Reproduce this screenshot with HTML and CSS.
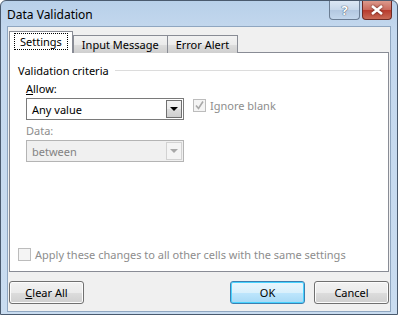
FILE: index.html
```html
<!DOCTYPE html>
<html lang="en">
<head>
    <meta charset="UTF-8">
    <title>Data Validation</title>
    <link rel="stylesheet" href="styles.css">
</head>
<body>
    <div class="window">
        <div class="titlebar">
            <span class="title">Data Validation</span>
            <div class="caption-buttons">
                <div class="cap-btn help">?</div>
                <div class="cap-btn close">
                    <svg width="14" height="10" viewBox="0 0 14 10">
                        <path d="M2 1 L12 9 M12 1 L2 9" stroke="#fff" stroke-width="2.6" fill="none"/>
                    </svg>
                </div>
            </div>
        </div>
        <div class="client">
            <div class="tabs">
                <div class="tab active"><span class="focus">Settings</span></div>
                <div class="tab">Input Message</div>
                <div class="tab">Error Alert</div>
            </div>
            <div class="panel">
                <div class="group-title">
                    <span>Validation criteria</span>
                    <div class="rule"></div>
                </div>
                <div class="row">
                    <div class="field">
                        <div class="label"><u>A</u>llow:</div>
                        <div class="select">
                            <span>Any value</span>
                            <div class="drop"><div class="arrow"></div></div>
                        </div>
                        <div class="label disabled">Data:</div>
                        <div class="select off">
                            <span>between</span>
                            <div class="drop"><div class="arrow"></div></div>
                        </div>
                    </div>
                    <div class="check-row ignore">
                        <div class="checkbox off">
                            <svg width="11" height="11" viewBox="0 0 11 11">
                                <path d="M2 5.5 L4.5 8.5 L9 1.5" stroke="#a8a8a8" stroke-width="1.6" fill="none"/>
                            </svg>
                        </div>
                        <span class="disabled">Ignore blank</span>
                    </div>
                </div>
                <div class="check-row apply">
                    <div class="checkbox off"></div>
                    <span class="disabled">Apply these changes to all other cells with the same settings</span>
                </div>
            </div>
            <div class="footer">
                <button class="btn"><u>C</u>lear All</button>
                <div class="spacer"></div>
                <button class="btn default">OK</button>
                <button class="btn">Cancel</button>
            </div>
        </div>
    </div>
</body>
</html>
```

FILE: styles.css
```css
html, body {
    margin: 0;
    padding: 0;
    background: #fff;
}
body {
    font-family: "Noto Sans", "Open Sans", sans-serif;
    font-size: 11px;
    color: #000;
}
.window {
    width: 398px;
    height: 315px;
    box-sizing: border-box;
    border: 1px solid #4a5a6e;
    border-radius: 6px 6px 0 0;
    background: linear-gradient(#b8d0e9, #c4d8ee 30px, #c9dcf0);
    padding: 0 6px 2px 6px;
    display: flex;
    flex-direction: column;
}
.titlebar {
    height: 25px;
    display: flex;
    align-items: flex-start;
    justify-content: space-between;
}
.title {
    margin-top: 5px;
    font-size: 12px;
    color: #000;
}
.caption-buttons {
    display: flex;
    gap: 2px;
    margin-right: -1px;
}
.cap-btn {
    height: 19px;
    box-sizing: border-box;
    border: 1px solid #6b7d93;
    border-top: none;
    border-radius: 0 0 4px 4px;
    display: flex;
    align-items: center;
    justify-content: center;
}
.help {
    width: 31px;
    background: linear-gradient(#dbe7f4, #c6d7ea 50%, #b3c8e0 51%, #c3d7ec);
    color: #fff;
    font-weight: bold;
    font-size: 13px;
    text-shadow: 0 0 1px #3a4a5e, 0 0 1px #3a4a5e;
}
.close {
    width: 30px;
    border-color: #6d2a24;
    background: linear-gradient(#dc9a8c, #c9695c 50%, #b83a2c 51%, #c96a56);
}
.close svg {
    filter: drop-shadow(0 0 1px #5a1c14);
}
.client {
    flex: 1;
    background: #f0f0f0;
    border: 1px solid #8fa6c0;
    padding: 5px 1px 0 1px;
    display: flex;
    flex-direction: column;
}
.tabs {
    display: flex;
    align-items: flex-end;
    height: 21px;
    position: relative;
    z-index: 1;
}
.tab {
    height: 17px;
    padding: 0 8px;
    border: 1px solid #898c95;
    border-bottom: none;
    margin-left: -1px;
    background: linear-gradient(#f2f2f2, #ebebeb 50%, #dddddd 51%, #cfcfcf);
    line-height: 17px;
}
.tab:first-child {
    margin-left: 0;
}
.tab.active {
    height: 21px;
    background: #fff;
    padding: 0 4px;
    line-height: 20px;
    z-index: 2;
}
.tab.active + .tab {
    margin-left: 0;
}
.focus {
    border: 1px dotted #000;
    padding: 0 5px;
}
.panel {
    height: 220px;
    box-sizing: border-box;
    background: #fff;
    border: 1px solid #898c95;
    margin-top: -1px;
    padding: 10px 8px 0 8px;
    display: flex;
    flex-direction: column;
}
.group-title {
    display: flex;
    align-items: center;
    gap: 6px;
}
.rule {
    flex: 1;
    border-top: 1px solid #dcdcdc;
    margin-right: -1px;
}
.row {
    display: flex;
    padding-left: 8px;
}
.field {
    width: 158px;
}
.label {
    height: 18px;
    line-height: 18px;
    margin-top: 2px;
}
.disabled {
    color: #8d8d8d;
}
.select {
    height: 22px;
    box-sizing: border-box;
    border: 1px solid #7a7a7a;
    background: #fff;
    display: flex;
    align-items: center;
    justify-content: space-between;
    padding-left: 5px;
}
.select.off {
    border-color: #b4b4b4;
    background: #f0f0f0;
    color: #838383;
}
.drop {
    width: 16px;
    height: 18px;
    box-sizing: border-box;
    margin-right: 1px;
    border: 1px solid #707070;
    background: linear-gradient(#f2f2f2, #ebebeb 50%, #dddddd 51%, #cfcfcf);
    display: flex;
    align-items: center;
    justify-content: center;
}
.arrow {
    width: 0;
    height: 0;
    border-left: 4px solid transparent;
    border-right: 4px solid transparent;
    border-top: 4px solid #000;
}
.select.off .drop {
    border-color: #d2d2d2;
    background: #f4f4f4;
}
.select.off .arrow {
    border-top-color: #a8a8a8;
}
.check-row {
    display: flex;
    align-items: center;
    gap: 4px;
}
.checkbox {
    width: 13px;
    height: 13px;
    box-sizing: border-box;
    border: 1px solid #8e8f8f;
    background: #fff;
    display: flex;
    align-items: center;
    justify-content: center;
}
.checkbox.off {
    border-color: #bcbcbc;
    background: #f4f4f4;
}
.ignore {
    align-self: flex-start;
    margin-top: 20px;
    margin-left: 9px;
}
.apply {
    margin-top: auto;
    margin-bottom: 9px;
}
.footer {
    display: flex;
    align-items: center;
    margin-top: 9px;
    gap: 9px;
}
.spacer {
    flex: 1;
}
.btn {
    width: 75px;
    height: 23px;
    font: inherit;
    color: #000;
    border: 1px solid #707070;
    border-radius: 3px;
    background: linear-gradient(#f2f2f2, #ebebeb 50%, #dddddd 51%, #cfcfcf);
    box-shadow: inset 0 0 0 1px #fcfcfc;
    padding: 0;
}
.btn.default {
    border-color: #3c7fb1;
    box-shadow: inset 0 0 0 1px #48d3ff;
    background: linear-gradient(#eaf6fd, #d9f0fc 50%, #bee6fd 51%, #a7d9f5);
}
```
